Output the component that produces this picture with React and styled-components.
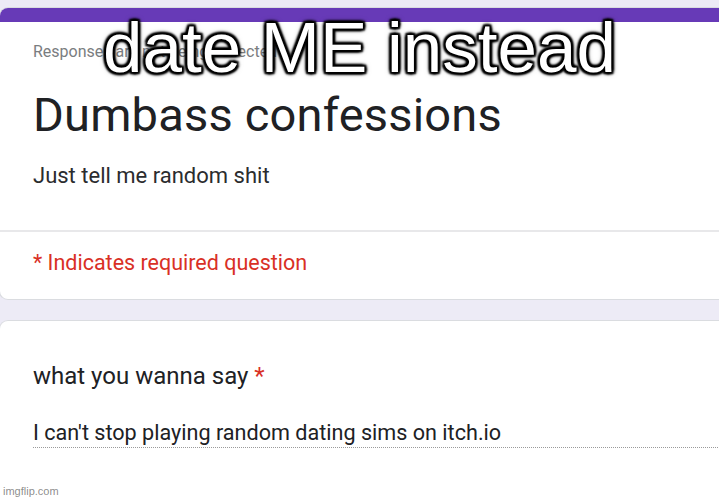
import React from 'react'
import styled, { createGlobalStyle } from 'styled-components'

const GlobalStyle = createGlobalStyle`
  html, body {
    margin: 0;
    padding: 0;
    background: #edebf6;
    overflow: hidden;
  }
  body {
    font-family: Roboto, "Noto Sans", Arial, sans-serif;
    color: #202124;
  }
`

const Page = styled.div`
  position: relative;
  width: 719px;
  height: 500px;
  overflow: hidden;
  background: #edebf6;
  padding-top: 7px;
  box-sizing: border-box;
`

const Card = styled.div`
  width: 740px;
  background: #fff;
  border-radius: 9px;
  border: 1px solid #dadce0;
  border-right: none;
  margin-left: -1px;
  overflow: hidden;
  margin-bottom: ${p => p.$gap || 0}px;
`

const AccentBar = styled.div`
  height: 14px;
  background: #673ab7;
`

const Section = styled.div`
  padding: ${p => p.$pad};
  border-top: ${p => (p.$divided ? '2px solid #e8e8ea' : 'none')};
`

const Note = styled.div`
  font-size: 16px;
  color: #7a7d80;
  line-height: 20px;
`

const Title = styled.h1`
  margin: 25px 0 0;
  font-size: 47px;
  font-weight: 400;
  line-height: 56px;
  color: #202124;
  letter-spacing: 0.2px;
`

const Description = styled.div`
  margin-top: 20px;
  font-size: 22px;
  line-height: 26px;
  color: #2b2c2e;
`

const Required = styled.div`
  font-size: 21.5px;
  line-height: 26px;
  color: #d93025;
`

const Question = styled.div`
  font-size: 24px;
  line-height: 28px;
  color: #202124;
`

const Star = styled.span`
  color: #d93025;
`

const Answer = styled.div`
  margin-top: 30px;
  font-size: 21.6px;
  line-height: 26px;
  color: #202124;
  padding-bottom: 1px;
  border-bottom: 1px dotted #9a9a9a;
`

const Caption = styled.div`
  position: absolute;
  top: 6px;
  left: 0;
  right: 0;
  text-align: center;
  font-family: "Liberation Sans", Arial, sans-serif;
  font-size: 71px;
  line-height: 84px;
  color: #fff;
  text-shadow:
    2px 2px 2px #000, -2px -2px 2px #000, 2px -2px 2px #000, -2px 2px 2px #000,
    0 2px 3px #000, 0 -2px 3px #000, 2px 0 3px #000, -2px 0 3px #000,
    0 0 6px rgba(0, 0, 0, 0.6);
`

const Watermark = styled.div`
  position: absolute;
  left: 3px;
  bottom: 3px;
  font-family: "Liberation Sans", Arial, sans-serif;
  font-size: 11px;
  color: rgba(120, 120, 120, 0.85);
`

export default function App() {
  return (
    <>
      <GlobalStyle />
      <Page>
        <Card $gap={20}>
          <AccentBar />
          <Section $pad="20px 0 41px 33px">
            <Note>Responses are not being collected</Note>
            <Title>Dumbass confessions</Title>
            <Description>Just tell me random shit</Description>
          </Section>
          <Section $divided $pad="18px 0 23px 33px">
            <Required>* Indicates required question</Required>
          </Section>
        </Card>
        <Card>
          <Section $pad="41px 0 60px 33px">
            <Question>
              what you wanna say <Star>*</Star>
            </Question>
            <Answer>I can't stop playing random dating sims on itch.io</Answer>
          </Section>
        </Card>
        <Caption>date ME instead</Caption>
        <Watermark>imgflip.com</Watermark>
      </Page>
    </>
  )
}
